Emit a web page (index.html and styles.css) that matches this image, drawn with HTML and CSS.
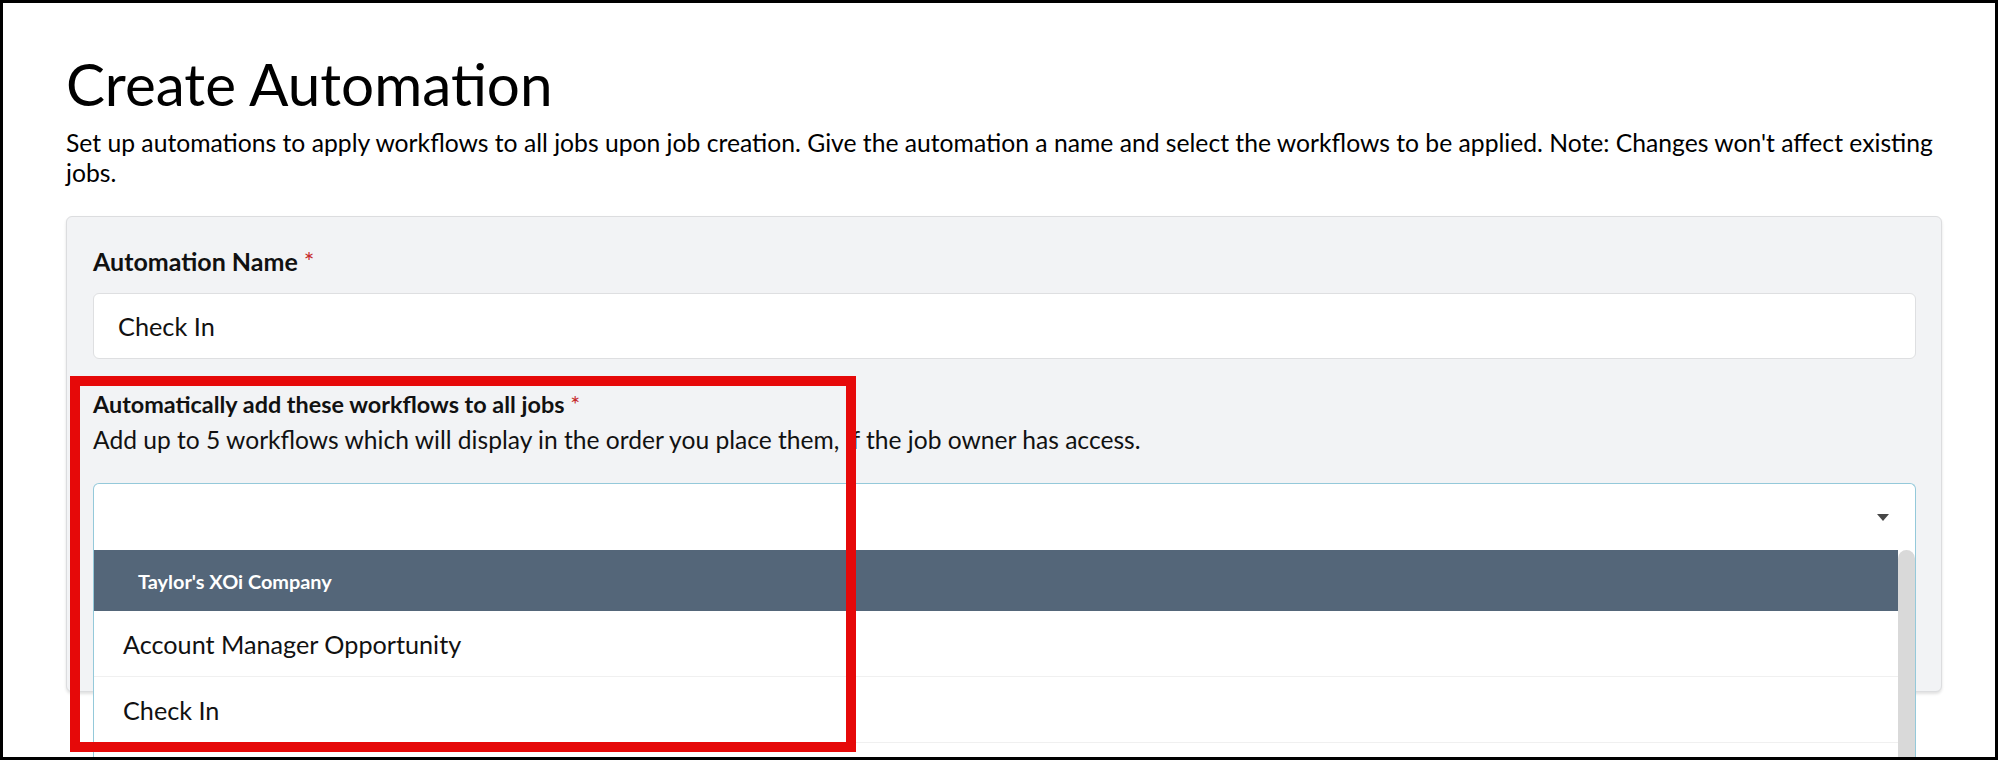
FILE: index.html
```html
<!DOCTYPE html>
<html lang="en">
<head>
    <meta charset="UTF-8">
    <meta name="viewport" content="width=device-width, initial-scale=1.0">
    <title>Create Automation</title>
    <link rel="stylesheet" href="styles.css">
</head>
<body>
    <div class="frame">
        <main class="page">
            <h1 class="title">Create Automation</h1>
            <p class="intro">Set up automations to apply workflows to all jobs upon job creation. Give the automation a name and select the workflows to be applied. Note: Changes won't affect existing jobs.</p>

            <section class="panel">
                <div class="field">
                    <label class="label">Automation Name <span class="req">*</span></label>
                    <div class="input">Check In</div>
                </div>

                <div class="field field-workflows">
                    <label class="label label-sm">Automatically add these workflows to all jobs <span class="req">*</span></label>
                    <p class="help">Add up to 5 workflows which will display in the order you place them, if the job owner has access.</p>
                    <div class="select">
                        <div class="select-control">
                            <span class="caret"></span>
                        </div>
                        <div class="menu">
                            <div class="menu-list">
                                <div class="menu-group">Taylor's XOi Company</div>
                                <div class="menu-option">Account Manager Opportunity</div>
                                <div class="menu-option">Check In</div>
                            </div>
                            <div class="menu-scroll"></div>
                        </div>
                    </div>
                </div>
            </section>
        </main>
        <div class="highlight"></div>
    </div>
</body>
</html>
```

FILE: styles.css
```css
* {
    box-sizing: border-box;
}

body {
    margin: 0;
    font-family: Lato, "Open Sans", sans-serif;
    color: #111;
    background: #fff;
}

.frame {
    position: relative;
    width: 1998px;
    height: 760px;
    border: 3px solid #000;
    overflow: hidden;
}

.page {
    padding: 45px 53px 0 63px;
}

.title {
    margin: 0 0 10px;
    font-size: 58.4px;
    font-weight: 400;
    line-height: 1.2;
    color: #000;
}

.intro {
    margin: 0 0 28px;
    font-size: 24.7px;
    line-height: 30px;
    color: #000;
}

.panel {
    background-color: #f2f3f5;
    border: 1px solid #dcdddf;
    border-radius: 6px;
    padding: 26px 25px 141px 26px;
    box-shadow: 0 2px 3px rgba(0, 0, 0, 0.12);
}

.label {
    display: block;
    font-size: 25px;
    font-weight: 700;
    line-height: 36px;
}

.req {
    color: #c62a2a;
    font-weight: 400;
}

.input {
    display: flex;
    align-items: center;
    height: 66px;
    margin-top: 14px;
    padding-left: 24px;
    background: #fff;
    border: 1px solid #dedfe1;
    border-radius: 6px;
    font-size: 25.3px;
}

.field-workflows {
    margin-top: 28px;
}

.label-sm {
    font-size: 23.4px;
    line-height: 34px;
}

.help {
    margin: 0 0 24px;
    font-size: 24.6px;
    line-height: 38px;
}

.select {
    position: relative;
}

.select-control {
    display: flex;
    align-items: center;
    justify-content: flex-end;
    height: 67px;
    padding-right: 26px;
    background: #fff;
    border: 1px solid #94c9da;
    border-bottom: none;
    border-radius: 6px 6px 0 0;
}

.caret {
    width: 0;
    height: 0;
    border-left: 6px solid transparent;
    border-right: 6px solid transparent;
    border-top: 7px solid #474747;
}

.menu {
    position: absolute;
    top: 100%;
    left: 0;
    right: 0;
    height: 260px;
    display: flex;
    background: #fff;
    border-left: 1px solid #94c9da;
    border-right: 1px solid #94c9da;
    z-index: 2;
}

.menu-list {
    flex: 1;
}

.menu-group {
    height: 61px;
    display: flex;
    align-items: center;
    padding-left: 44px;
    background-color: #546679;
    color: #fff;
    font-size: 19.9px;
    font-weight: 700;
}

.menu-option {
    height: 66px;
    display: flex;
    align-items: center;
    padding-left: 29px;
    border-bottom: 1px solid #f0f0f0;
    font-size: 25.2px;
}

.menu-scroll {
    width: 17px;
    background: #d9d9d9;
    border-radius: 9px;
}

.highlight {
    position: absolute;
    left: 67px;
    top: 373px;
    width: 786px;
    height: 376px;
    border: 10px solid #e60909;
    z-index: 3;
}
```
